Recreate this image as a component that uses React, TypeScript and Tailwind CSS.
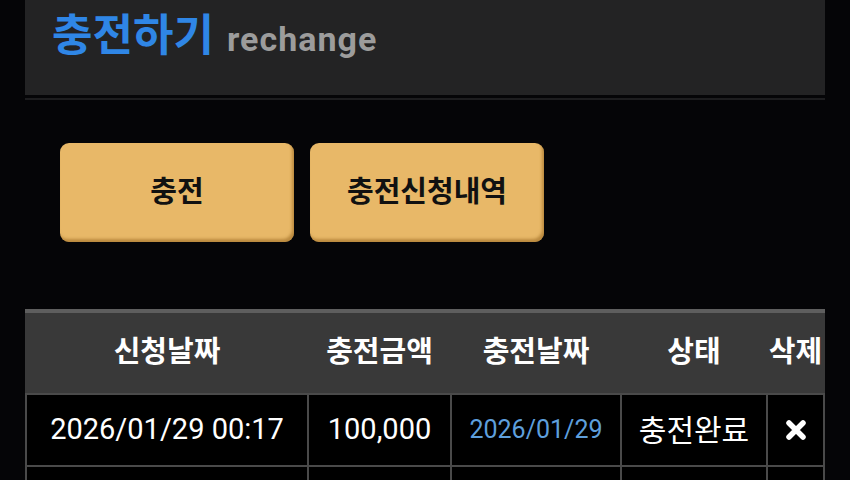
import React from "react";

const font = { fontFamily: 'Roboto, "Noto Sans CJK KR", sans-serif' };

const rows = [
    { requested: "2026/01/29 00:17", amount: "100,000", charged: "2026/01/29", status: "충전완료" },
];

const DeleteIcon = () => (
    <svg width="22" height="22" viewBox="0 0 22 22" className="block">
        <path d="M4 4 L18 18 M18 4 L4 18" stroke="white" strokeWidth="5.5" strokeLinecap="round" />
    </svg>
);

const cols = "grid grid-cols-[280px_141px_168px_144px_55px] gap-[2px]";
const cell = "h-[70px] bg-black flex items-center justify-center";

const App = () => {
    return (
        <div className="w-[850px] h-[480px] overflow-hidden bg-[#050507] px-[25px]" style={font}>
            <div className="h-[95px] bg-[#232324] flex items-baseline pl-[27px] pt-[14px]">
                <span className="text-[44px] font-bold text-[#2f86e6] leading-none">충전하기</span>
                <span className="ml-[13px] text-[34px] font-bold text-[#9c9c9c] leading-none tracking-[0.03em]">
                    rechange
                </span>
            </div>
            <div className="mt-[3px] h-[2px] bg-[#1d1d1f]" />

            <div className="flex gap-[16px] pt-[43px] pl-[35px]">
                {["충전", "충전신청내역"].map((label) => (
                    <button
                        key={label}
                        className="w-[234px] h-[99px] rounded-[9px] bg-[#e8b868] text-[29px] font-bold text-[#111] shadow-[inset_-2px_-3px_3px_rgba(150,100,30,0.55)]"
                    >
                        {label}
                    </button>
                ))}
            </div>

            <div className="mt-[67px]">
                <div className={`${cols} px-[2px] h-[84px] bg-[#393939] border-t-4 border-[#5e5e5e]`}>
                    {["신청날짜", "충전금액", "충전날짜", "상태", "삭제"].map((h) => (
                        <div key={h} className="flex items-center justify-center text-[29px] font-bold text-white">
                            {h}
                        </div>
                    ))}
                </div>
                <div className={`${cols} p-[2px] bg-[#4a4a4a]`}>
                    {rows.map((r, i) => (
                        <React.Fragment key={i}>
                            <div className={`${cell} text-[29px] text-white`}>{r.requested}</div>
                            <div className={`${cell} text-[29px] text-white`}>{r.amount}</div>
                            <div className={`${cell} text-[25px] text-[#5e9fdc]`}>{r.charged}</div>
                            <div className={`${cell} text-[30px] text-white`}>{r.status}</div>
                            <div className={cell}>
                                <DeleteIcon />
                            </div>
                        </React.Fragment>
                    ))}
                    {/* next row, below the fold */}
                    <div className={cell} />
                    <div className={cell} />
                    <div className={cell} />
                    <div className={cell} />
                    <div className={cell} />
                </div>
            </div>
        </div>
    );
};

export default App;
